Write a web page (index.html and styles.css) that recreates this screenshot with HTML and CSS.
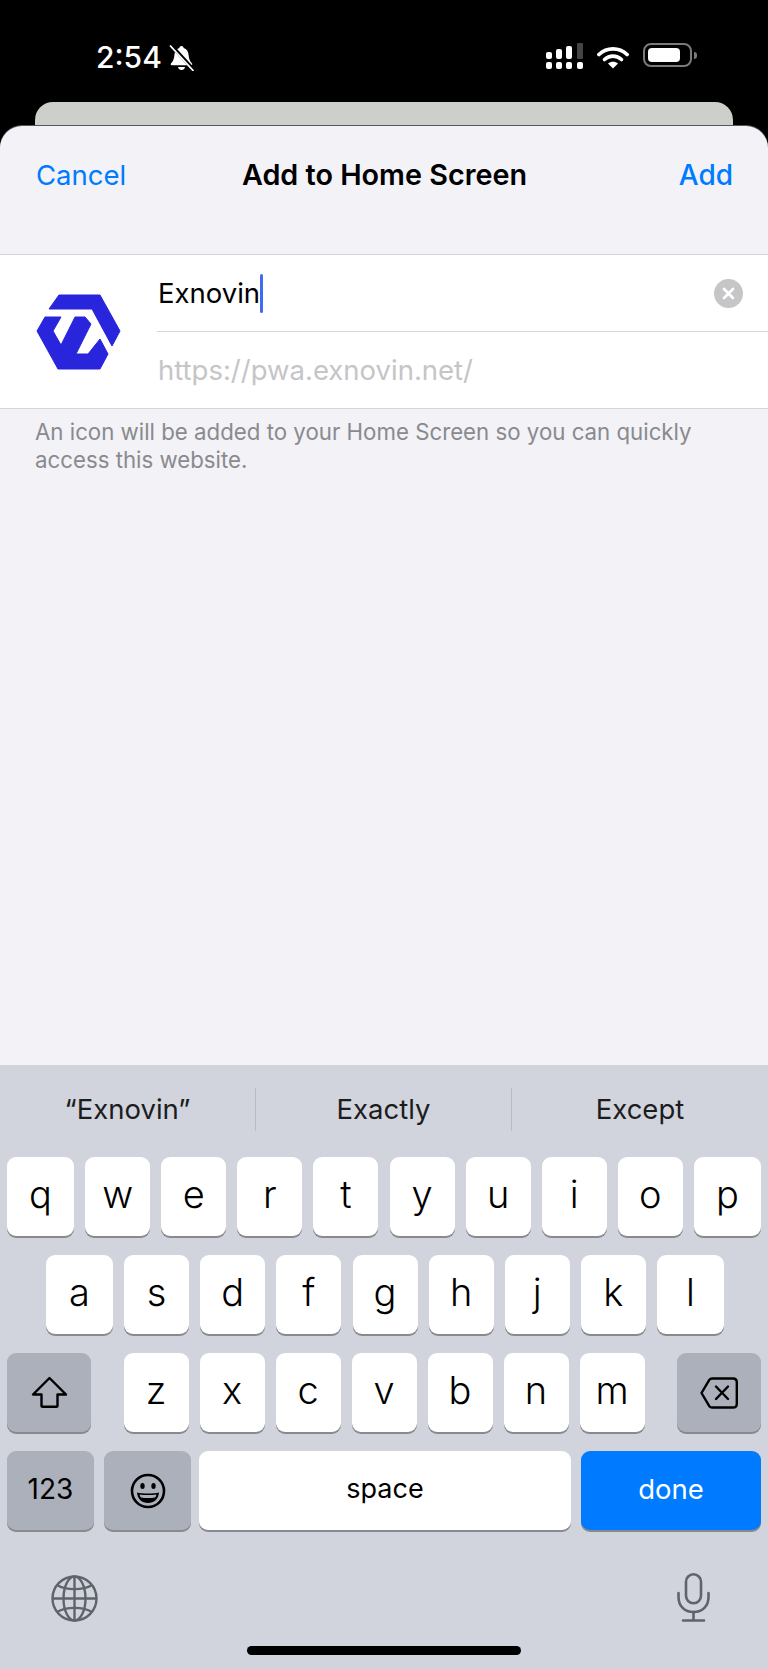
FILE: index.html
```html
<!DOCTYPE html>
<html lang="en">
  <head>
    <meta charset="UTF-8" />
    <meta name="viewport" content="width=device-width, initial-scale=1.0" />
    <title>Add to Home Screen</title>
    <link rel="stylesheet" href="styles.css">
  </head>
  <body>
    <div class="phone">
      <div class="status-bar">
        <span class="time">2:54</span>
        <svg class="bell" viewBox="0 0 25 26">
          <path d="M12.500 1c1.200 0 2 .8 2.200 1.900c3 .9 4.600 3.500 4.900 7.100c.3 3.400.9 5.700 3.400 8.500c.6.8.2 1.700-.9 1.700H2.900c-1.100 0-1.500-.9-.9-1.700c2.500-2.800 3.100-5.100 3.400-8.500c.3-3.600 1.900-6.200 4.900-7.100C10.500 1.800 11.300 1 12.500 1z" fill="#fff"/>
          <path d="M9 22h7c-.3 1.800-1.700 3-3.500 3S9.300 23.800 9 22z" fill="#fff"/>
          <path d="M2 0L24 24" stroke="#000" stroke-width="3.500"/>
          <path d="M1 0.500L24.500 26" stroke="#fff" stroke-width="1.700"/>
        </svg>
        <div class="status-icons">
          <svg class="signal" viewBox="0 0 38 27">
            <rect x="0" y="9" width="6" height="7" rx="2" fill="#fff"/>
            <rect x="10" y="6" width="6" height="10" rx="2" fill="#fff"/>
            <rect x="20" y="3" width="6" height="13" rx="2" fill="#fff"/>
            <rect x="31" y="0" width="6" height="16" rx="1" fill="#444"/>
            <rect x="0" y="19" width="6" height="7" rx="2" fill="#fff"/>
            <rect x="10" y="19" width="6" height="7" rx="2" fill="#fff"/>
            <rect x="20" y="19" width="6" height="7" rx="2" fill="#fff"/>
            <rect x="31" y="19" width="6" height="7" rx="2" fill="#fff"/>
          </svg>
          <svg class="wifi" viewBox="0 0 32 23">
            <path d="M2 8.500C9.800 1 22.200 1 30 8.500" fill="none" stroke="#fff" stroke-width="3.800" stroke-linecap="round"/>
            <path d="M7.500 13.500C12.400 9 19.600 9 24.500 13.500" fill="none" stroke="#fff" stroke-width="3.600" stroke-linecap="round"/>
            <path d="M16 22.500L11 17.500C13.800 15.100 18.200 15.100 21 17.500z" fill="#fff"/>
          </svg>
          <div class="battery"><div class="battery-level"></div></div>
          <div class="battery-cap"></div>
        </div>
      </div>

      <div class="behind-card"></div>

      <div class="sheet">
        <div class="nav">
          <span class="nav-btn">Cancel</span>
          <span class="nav-title">Add to Home Screen</span>
          <span class="nav-btn nav-add">Add</span>
        </div>

        <div class="group">
          <svg class="logo" viewBox="36 293 85 76">
            <path d="M59 294H100L120 330L112 345L92 308H49z" fill="#2825dc" stroke="#2825dc" stroke-width="1" stroke-linejoin="round"/>
            <path d="M61 316H45L37 330L58 368H100L108 353L100 338L88 353H76L91 323L85 316H75L61 344L53 330z" fill="#2825dc" stroke="#2825dc" stroke-width="1" stroke-linejoin="round"/>
          </svg>
          <div class="fields">
            <div class="field field-name">
              <span class="name-text">Exnovin</span>
              <span class="caret"></span>
              <svg class="clear" viewBox="0 0 29 29">
                <circle cx="14.500" cy="14.500" r="14.500" fill="#c6c6c8"/>
                <path d="M10 10L19 19M19 10L10 19" stroke="#fff" stroke-width="2.600" stroke-linecap="round"/>
              </svg>
            </div>
            <div class="field field-url">https://pwa.exnovin.net/</div>
          </div>
        </div>

        <p class="caption">An icon will be added to your Home Screen so you can quickly access this website.</p>
      </div>

      <div class="keyboard">
        <div class="suggestions">
          <div class="suggestion">“Exnovin”</div>
          <div class="suggestion">Exactly</div>
          <div class="suggestion">Except</div>
        </div>

        <div class="keys">
          <div class="row">
            <div class="key edge">q</div>
            <div class="key">w</div>
            <div class="key">e</div>
            <div class="key">r</div>
            <div class="key">t</div>
            <div class="key">y</div>
            <div class="key">u</div>
            <div class="key">i</div>
            <div class="key">o</div>
            <div class="key edge">p</div>
          </div>
          <div class="row row-home">
            <div class="key edge">a</div>
            <div class="key">s</div>
            <div class="key">d</div>
            <div class="key">f</div>
            <div class="key">g</div>
            <div class="key">h</div>
            <div class="key">j</div>
            <div class="key">k</div>
            <div class="key edge">l</div>
          </div>
          <div class="row">
            <div class="key fn shift">
              <svg width="37" height="33" viewBox="0 0 37 33">
                <path d="M18.500 2L2 18.500H10.500V29.500C10.500 30.300 11 30.800 11.800 30.800H25.200C26 30.800 26.500 30.300 26.500 29.500V18.500H35z" fill="none" stroke="#000" stroke-width="2.400" stroke-linejoin="round"/>
              </svg>
            </div>
            <div class="letters">
              <div class="key">z</div>
              <div class="key">x</div>
              <div class="key">c</div>
              <div class="key">v</div>
              <div class="key">b</div>
              <div class="key">n</div>
              <div class="key">m</div>
            </div>
            <div class="key fn shift">
              <svg width="38" height="32" viewBox="0 0 38 32">
                <path d="M12 1.500H33C35.500 1.500 36.800 2.800 36.800 5.300V26.700C36.800 29.200 35.500 30.500 33 30.500H12C10.800 30.500 10 30 9.300 29.200L1.500 16L9.300 2.800C10 2 10.800 1.500 12 1.500z" fill="none" stroke="#000" stroke-width="2.400" stroke-linejoin="round"/>
                <path d="M16 9.500L28 22M28 9.500L16 22" stroke="#000" stroke-width="2.400" stroke-linecap="round"/>
              </svg>
            </div>
          </div>
          <div class="row row-bottom">
            <div class="key fn mode">123</div>
            <div class="key fn mode emoji">
              <svg width="36" height="36" viewBox="0 0 36 36">
                <circle cx="18" cy="18" r="16" fill="none" stroke="#000" stroke-width="2.600"/>
                <ellipse cx="12.500" cy="13" rx="2.200" ry="3" fill="#000"/>
                <ellipse cx="23.500" cy="13" rx="2.200" ry="3" fill="#000"/>
                <path d="M7 19.500C12 20.800 24 20.800 29 19.500C28.500 26 24 30 18 30C12 30 7.500 26 7 19.500z" fill="#000"/>
                <path d="M9.500 21.500C14 22.300 22 22.300 26.500 21.500C26 23 25.500 24 25 24.500C21 25.200 15 25.200 11 24.500C10.500 24 10 23 9.500 21.500z" fill="#acb0bb"/>
              </svg>
            </div>
            <div class="key space">space</div>
            <div class="key done">done</div>
          </div>
        </div>

        <div class="kb-bottom">
          <svg class="globe" width="47" height="47" viewBox="0 0 47 47">
            <g fill="none" stroke="#5f636a" stroke-width="2.400">
              <circle cx="23.500" cy="23.500" r="22"/>
              <ellipse cx="23.500" cy="23.500" rx="11" ry="22"/>
              <path d="M23.500 1.500V45.500M1.500 23.500H45.500"/>
              <path d="M6 10C15 15.500 32 15.500 41 10M6 37C15 31.500 32 31.500 41 37"/>
            </g>
          </svg>
          <svg class="mic" width="33" height="49" viewBox="0 0 33 49">
            <g fill="none" stroke="#5f636a" stroke-width="2.600" stroke-linecap="round">
              <rect x="9" y="1.300" width="15" height="29" rx="7.500"/>
              <path d="M1.500 20V24C1.500 33 7.500 39 16.500 39C25.500 39 31.500 33 31.500 24V20"/>
              <path d="M16.500 39V47M6 47.500H27"/>
            </g>
          </svg>
        </div>
        <div class="home-indicator"></div>
      </div>
    </div>
  </body>
</html>
```

FILE: styles.css
```css
* {
  box-sizing: border-box;
}
body {
  margin: 0;
  background: #000;
  font-family: "Inter", "Roboto", sans-serif;
}
.phone {
  display: flex;
  flex-direction: column;
  width: 768px;
  height: 1669px;
  overflow: hidden;
  background: #000;
}

/* status bar */
.status-bar {
  display: flex;
  align-items: flex-start;
  height: 102px;
  padding: 40px 0 0 96px;
  color: #fff;
}
.time {
  font-size: 30px;
  font-weight: 500;
  line-height: 35px;
}
.bell {
  width: 25px;
  height: 26px;
  margin: 5px 0 0 7px;
}
.status-icons {
  display: flex;
  margin-left: auto;
  margin-right: 71px;
  margin-top: 3px;
}
.signal {
  width: 38px;
  height: 27px;
}
.wifi {
  width: 32px;
  height: 23px;
  margin: 3px 0 0 13px;
}
.battery {
  width: 49px;
  height: 24px;
  margin-left: 14px;
  padding: 3px;
  border: 2px solid #7a7a7a;
  border-radius: 8px;
}
.battery-level {
  width: 32px;
  height: 14px;
  border-radius: 4px;
  background: #fff;
}
.battery-cap {
  width: 3px;
  height: 7px;
  margin: 9px 0 0 2px;
  border-radius: 0 3px 3px 0;
  background: #7a7a7a;
}

.behind-card {
  flex: none;
  height: 24px;
  margin: 0 35px;
  border-radius: 18px 18px 0 0;
  background: #cdcfca;
}

/* sheet */
.sheet {
  flex: 1;
  border-radius: 22px 22px 0 0;
  background: #f2f2f7;
  box-shadow: 0 -1px 0 #55565a;
}
.nav {
  display: grid;
  grid-template-columns: 1fr auto 1fr;
  align-items: center;
  height: 98px;
  padding: 0 35px 0 36px;
  font-size: 27.500px;
  line-height: 98px;
}
.nav-btn {
  color: #007aff;
}
.nav-add {
  justify-self: end;
  font-size: 28px;
  font-weight: 500;
}
.nav-title {
  font-size: 28.750px;
  font-weight: 600;
  color: #000;
}
.group {
  display: flex;
  align-items: center;
  height: 155px;
  margin-top: 30px;
  padding-left: 36px;
  border-top: 1px solid #d6d6da;
  border-bottom: 1px solid #d6d6da;
  background: #fff;
}
.logo {
  flex: none;
  width: 85px;
  height: 76px;
}
.fields {
  flex: 1;
  margin-left: 36px;
}
.field {
  display: flex;
  align-items: center;
  height: 76px;
  font-size: 27.500px;
}
.field-name {
  height: 77px;
  padding-right: 25px;
  border-bottom: 1px solid #d6d6da;
  color: #000;
}
.field-url {
  padding-left: 1px;
  color: #c5c5c8;
}
.name-text {
  padding-left: 1px;
}
.caret {
  width: 3px;
  height: 39px;
  border-radius: 2px;
  background: #3f6bf2;
}
.clear {
  width: 29px;
  height: 29px;
  margin-left: auto;
}
.caption {
  margin: 9px 0 0;
  padding: 0 35px;
  font-size: 22.250px;
  line-height: 28px;
  color: #8a8a8e;
}

/* keyboard */
.keyboard {
  flex: none;
  height: 604px;
  background: #d1d4dc;
}
.suggestions {
  display: grid;
  grid-template-columns: 255px 256px 257px;
  height: 92px;
  padding-top: 23px;
}
.suggestion {
  height: 43px;
  font-size: 27.500px;
  line-height: 43px;
  text-align: center;
  color: #1c1c1e;
}
.suggestion + .suggestion {
  border-left: 1px solid #b8bbc3;
}
.keys {
  display: flex;
  flex-direction: column;
  gap: 19px;
  padding: 0 7px;
}
.row {
  display: flex;
  justify-content: space-between;
  height: 79px;
}
.row-home {
  padding: 0 37px 0 39px;
}
.row-bottom {
  justify-content: flex-start;
}
.letters {
  display: flex;
  justify-content: space-between;
  width: 521px;
}
.key {
  display: flex;
  align-items: center;
  justify-content: center;
  width: 65px;
  height: 79px;
  padding-bottom: 6px;
  border-radius: 9px;
  background: #fff;
  box-shadow: 0 2px 0 #898a8e;
  font-size: 38px;
  font-weight: 300;
  color: #000;
}
.edge {
  width: 67px;
}
.fn {
  background: #acb0bb;
}
.shift {
  width: 84px;
  padding-bottom: 0;
}
.mode {
  width: 87px;
  padding-bottom: 4px;
  font-size: 28px;
  font-weight: 400;
}
.emoji {
  margin-left: 10px;
  padding-bottom: 0;
}
.space {
  width: 372px;
  margin-left: 8px;
  padding-bottom: 4px;
  font-size: 27px;
  font-weight: 400;
}
.done {
  width: 180px;
  margin-left: 10px;
  padding-bottom: 4px;
  font-size: 27.500px;
  font-weight: 400;
  background: #007aff;
  color: #fff;
}
.kb-bottom {
  display: flex;
  align-items: flex-end;
  justify-content: space-between;
  height: 49px;
  margin-top: 43px;
  padding: 0 58px 0 51px;
}
.home-indicator {
  width: 274px;
  height: 9px;
  margin: 24px auto 0;
  border-radius: 5px;
  background: #000;
}
```
